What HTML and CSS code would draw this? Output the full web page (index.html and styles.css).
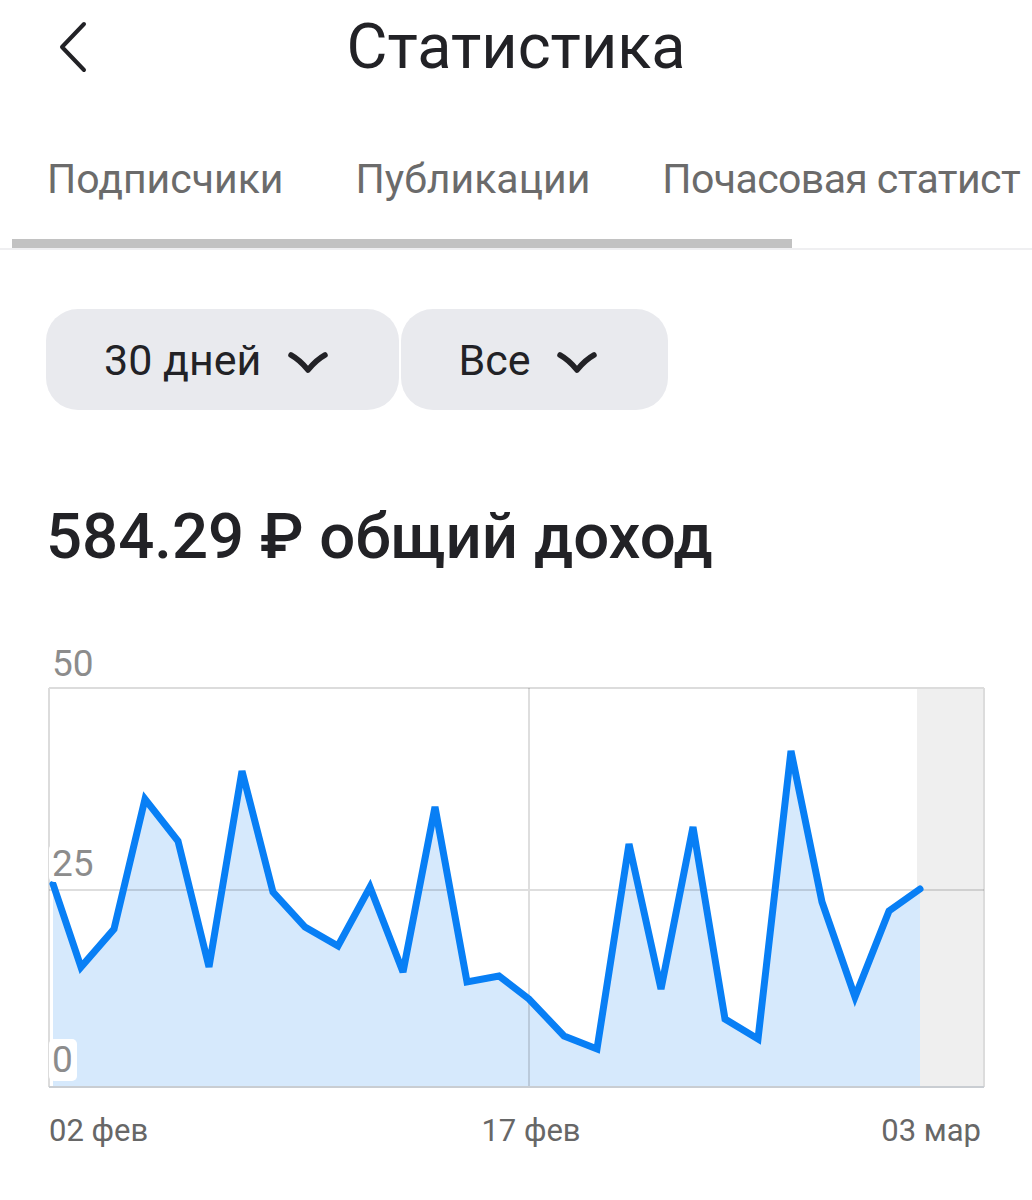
FILE: index.html
```html
<!DOCTYPE html>
<html lang="ru">
  <head>
    <meta charset="UTF-8" />
    <meta name="viewport" content="width=device-width, initial-scale=1.0" />
    <title>Статистика</title>
    <link rel="stylesheet" href="styles.css">
  </head>
  <body>
    <div class="topbar">
      <button class="back-button" aria-label="Назад">
        <svg width="34" height="54" viewBox="0 0 34 54">
          <path d="M28 4 L6 27 L28 50" fill="none" stroke="#222226" stroke-width="4" stroke-linecap="round" stroke-linejoin="round" />
        </svg>
      </button>
      <h1 class="title">Статистика</h1>
    </div>

    <div class="tabs">
      <div class="tab-list">
        <span class="tab">Подписчики</span>
        <span class="tab">Публикации</span>
        <span class="tab tab-last">Почасовая статист</span>
      </div>
      <div class="tab-indicator"></div>
      <div class="tab-divider"></div>
    </div>

    <div class="filters">
      <button class="filter">
        <span>30 дней</span>
        <svg class="chevron" width="42" height="24" viewBox="0 0 42 24">
          <path d="M4 5 Q13 10 21 20 Q29 10 38 5" fill="none" stroke="#222226" stroke-width="5.5" stroke-linecap="round" stroke-linejoin="round" />
        </svg>
      </button>
      <button class="filter">
        <span>Все</span>
        <svg class="chevron" width="42" height="24" viewBox="0 0 42 24">
          <path d="M4 5 Q13 10 21 20 Q29 10 38 5" fill="none" stroke="#222226" stroke-width="5.5" stroke-linecap="round" stroke-linejoin="round" />
        </svg>
      </button>
    </div>

    <h2 class="total">584.29 ₽ общий доход</h2>

    <div class="chart">
      <svg width="937" height="520" viewBox="0 0 937 520">
        <!-- future days -->
        <rect x="869" y="49" width="67" height="399" fill="#efefef" />

        <!-- area + line -->
        <polygon fill="#d6e9fc" points="5,448 5,245 33,328 66,290 97,160 130,202 161,328 194,132 225,253 257,288 290,307 322,248 355,333 387,168 419,343 451,337 481,360 516,397 549,410 581,205 613,350 645,188 677,380 710,400 743,112 774,263 807,358 841,272 872,250 872,448" />

        <!-- grid -->
        <g stroke-width="2" fill="none">
          <path d="M1 49 H936 M936 49 V448 M1 49 V448" stroke="#dcdcdc" />
          <path d="M1 251 H936 M481 49 V448" stroke="rgba(0,0,0,0.13)" />
          <path d="M1 448 H936" stroke="#c9cdd2" />
        </g>

        <polyline fill="none" stroke="#087ff5" stroke-width="7" stroke-linecap="round" stroke-linejoin="miter" stroke-miterlimit="3"
          points="5,245 33,328 66,290 97,160 130,202 161,328 194,132 225,253 257,288 290,307 322,248 355,333 387,168 419,343 451,337 481,360 516,397 549,410 581,205 613,350 645,188 677,380 710,400 743,112 774,263 807,358 841,272 872,250" />

        <!-- y axis labels -->
        <rect x="1" y="205" width="44" height="38" rx="5" fill="#fff" />
        <rect x="1" y="400" width="28" height="42" rx="5" fill="#fff" />
        <g class="axis-y">
          <text x="4" y="37">50</text>
          <text x="4" y="237">25</text>
          <text x="4" y="433">0</text>
        </g>

        <!-- x axis labels -->
        <g class="axis-x">
          <text x="1" y="502">02 фев</text>
          <text x="483" y="502" text-anchor="middle">17 фев</text>
          <text x="933" y="502" text-anchor="end">03 мар</text>
        </g>
      </svg>
    </div>
  </body>
</html>
```

FILE: styles.css
```css
body {
  margin: 0;
  padding: 0;
  font-family: Roboto, 'Noto Sans', sans-serif;
  background-color: #fff;
  color: #222226;
  width: 1032px;
  overflow: hidden;
}
.topbar {
  position: relative;
  height: 94px;
  display: flex;
  align-items: center;
  justify-content: center;
}
.back-button {
  position: absolute;
  left: 56px;
  top: 20px;
  padding: 0;
  border: none;
  background: none;
  line-height: 0;
}
.title {
  margin: 0;
  font-size: 63px;
  font-weight: 400;
  line-height: 94px;
}
.tabs {
  overflow: hidden;
}
.tab-list {
  display: flex;
  gap: 72px;
  padding: 62px 0 37px 47px;
  white-space: nowrap;
}
.tab {
  font-size: 41px;
  line-height: 46px;
  color: #6b6b6b;
  flex-shrink: 0;
}
.tab-last {
  letter-spacing: -0.6px;
}
.tab-indicator {
  margin-left: 12px;
  width: 780px;
  height: 9px;
  background-color: #c2c2c2;
}
.tab-divider {
  height: 2px;
  background-color: #efeff1;
}
.filters {
  display: flex;
  gap: 2px;
  margin: 59px 0 0 46px;
}
.filter {
  display: flex;
  align-items: center;
  gap: 26px;
  height: 101px;
  padding: 0 70px 0 57px;
  border: none;
  border-radius: 32px;
  background-color: #e9eaee;
  font-family: inherit;
  font-size: 43px;
  color: #222226;
}
.filter:first-child {
  padding-left: 58px;
}
.chevron {
  margin-top: 4px;
}
.total {
  margin: 90px 0 0 46px;
  font-size: 63.5px;
  font-weight: 500;
  line-height: 74px;
}
.chart {
  margin: 65px 0 0 48px;
  line-height: 0;
}
.axis-y text {
  font-family: Roboto, sans-serif;
  font-size: 37px;
  fill: #8c8c8c;
}
.axis-x text {
  font-family: Roboto, sans-serif;
  font-size: 31px;
  fill: #676767;
}
```
